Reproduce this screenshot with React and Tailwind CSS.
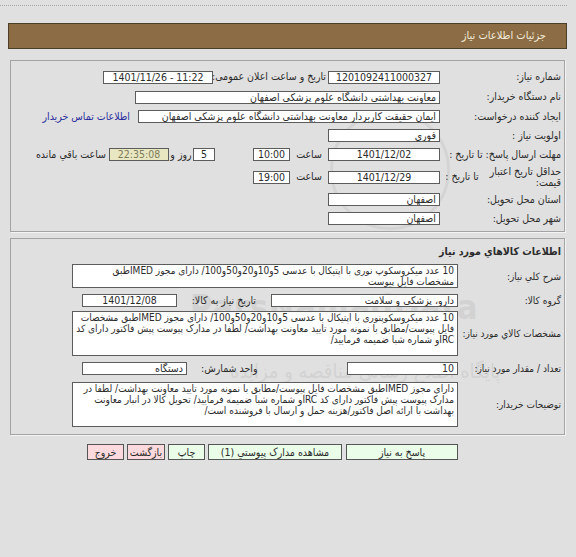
import React from 'react';

const Field = ({ w, children, align = 'right', ltr = false, className = '' }) => (
  <div
    dir={ltr ? 'ltr' : undefined}
    className={`h-[13px] bg-white border border-[#5c5c5c] leading-[11px] px-[3px] whitespace-nowrap overflow-hidden ${
      align === 'center' ? 'text-center' : 'text-right'
    } ${className}`}
    style={{ width: w }}
  >
    {children}
  </div>
);

const Row = ({ h, label, labelW, children }) => (
  <div className="flex items-center" style={{ height: h }}>
    <div className="shrink-0 text-right pr-[3px] whitespace-nowrap" style={{ width: labelW }}>
      {label}
    </div>
    {children}
  </div>
);

const Area = ({ h, children }) => (
  <div
    className="w-[386px] bg-white border border-[#5c5c5c] px-[3px] text-[10px] leading-[11px] text-right overflow-hidden"
    style={{ height: h }}
  >
    {children}
  </div>
);

const Label2 = ({ children }) => (
  <div className="w-[106px] shrink-0 text-right pr-[3px] whitespace-nowrap text-[10px]">{children}</div>
);

export default function App() {
  return (
    <div className="relative w-[576px] h-[557px] overflow-hidden bg-[#e0e0e0] text-[10.5px] text-[#2b2b2b] font-['DejaVu_Sans_Condensed','DejaVu_Sans',sans-serif]">
      {/* faint watermark */}
      <div className="absolute left-[190px] top-[282px] text-[34px] font-bold text-[#000] opacity-[0.06] tracking-wide pointer-events-none">
        ParsNamadData
      </div>
      <div className="absolute left-[330px] top-[110px] w-[120px] h-[120px] rounded-full border-[3px] border-[#000] opacity-[0.05] pointer-events-none" />
      <div dir="rtl" className="absolute left-[230px] top-[356px] text-[20px] text-[#000] opacity-[0.06] pointer-events-none">
        پایگاه اطلاع رسانی مناقصه و مزایده
      </div>

      <div className="pl-[8px] pt-[5px]">
        <div dir="rtl" className="w-[559px] relative">
          <div className="border-t border-dotted border-[#a8a8a8] -ml-[8px]" />

          {/* header */}
          <div className="mt-[17px] h-[26px] bg-[#8b6c44] border border-[#4d3e29] flex items-center pr-[20px] text-[#f3ecdc] text-[11px]">
            جزئیات اطلاعات نیاز
          </div>

          {/* box 1 */}
          <div className="mt-[11px] mx-[2px] border border-[#a3a3a3] pt-[6px] pb-[3px] shadow-[1px_1px_0_#f4f4f4]">
            <Row h={20} labelW={124} label="شماره نیاز:">
              <Field w={112} align="center">1201092411000327</Field>
              <div className="w-[115px] text-right pr-[2px] whitespace-nowrap">تاریخ و ساعت اعلان عمومی:</div>
              <Field w={110} align="center" ltr>1401/11/26 - 11:22</Field>
            </Row>
            <Row h={20} labelW={124} label="نام دستگاه خریدار:">
              <Field w={305}>معاونت بهداشتی دانشگاه علوم پزشکی اصفهان</Field>
            </Row>
            <Row h={19} labelW={124} label="ایجاد کننده درخواست:">
              <Field w={302}>ایمان حقیقت کاربردار معاونت بهداشتی دانشگاه علوم پزشکی اصفهان</Field>
              <a className="mr-[8px] text-[#2b2f9e] whitespace-nowrap">اطلاعات تماس خریدار</a>
            </Row>
            <Row h={19} labelW={124} label="اولویت نیاز :">
              <Field w={112}>فوری</Field>
            </Row>
            <Row h={19} labelW={124} label="مهلت ارسال پاسخ: تا تاریخ :">
              <Field w={112} align="center">1401/12/02</Field>
              <div className="w-[38px] text-center">ساعت</div>
              <Field w={37} align="center">10:00</Field>
              <div className="w-[38px]" />
              <Field w={22} align="center">5</Field>
              <div className="w-[24px] text-center whitespace-nowrap">روز و</div>
              <Field w={60} align="center" className="!bg-[#e9e7c2] text-[#7d7c5a]">22:35:08</Field>
              <div className="mr-[3px] whitespace-nowrap">ساعت باقي مانده</div>
            </Row>
            <div className="flex items-center h-[26px]">
              <div className="w-[124px] shrink-0 flex items-center">
                <div className="w-[80px] text-right pr-[3px] leading-[11px]">حداقل تاریخ اعتبار قیمت:</div>
                <div className="flex-1 text-center whitespace-nowrap">تا تاریخ :</div>
              </div>
              <Field w={112} align="center">1401/12/29</Field>
              <div className="w-[38px] text-center">ساعت</div>
              <Field w={37} align="center">19:00</Field>
            </div>
            <Row h={19} labelW={124} label="استان محل تحویل:">
              <Field w={112}>اصفهان</Field>
            </Row>
            <Row h={19} labelW={124} label="شهر محل تحویل:">
              <Field w={112}>اصفهان</Field>
            </Row>
          </div>

          {/* box 2 */}
          <div className="mt-[6px] mx-[2px] border border-[#a3a3a3] pt-[4px] pb-[7px] shadow-[1px_1px_0_#f4f4f4]">
            <div className="h-[18px] flex items-center pr-[3px] font-bold">اطلاعات کالاهاي مورد نیاز</div>
            <div className="flex items-center mt-[3px]">
              <Label2>شرح کلي نیاز:</Label2>
              <Area h={24}>
                10 عدد میکروسکوپ نوری با اپتیکال با عدسی 5و10و20و50و100/ دارای مجوز IMEDطبق مشخصات فایل پیوست
              </Area>
            </div>
            <div className="flex items-center h-[13px] mt-[6px]">
              <Label2>گروه کالا:</Label2>
              <Field w={187}>دارو، پزشکی و سلامت</Field>
              <div className="w-[94px] text-right pr-[15px] whitespace-nowrap">تاریخ نیاز به کالا:</div>
              <Field w={95} align="center">1401/12/08</Field>
            </div>
            <div className="flex items-center mt-[4px]">
              <Label2>مشخصات کالاي مورد نیاز:</Label2>
              <Area h={45}>
                10 عدد میکروسکوپنوری با اپتیکال با عدسی 5و10و20و50و100/ دارای مجوز IMEDطبق مشخصات فایل پیوست/مطابق با نمونه مورد تایید معاونت بهداشت/ لطفا در مدارک پیوست پیش فاکتور دارای کد  IRCو شماره شبا ضمیمه فرمایید/
              </Area>
            </div>
            <div className="flex items-center h-[13px] mt-[6px]">
              <Label2>تعداد / مقدار مورد نیاز:</Label2>
              <Field w={111}>10</Field>
              <div className="w-[160px] text-left pl-[14px] whitespace-nowrap">واحد شمارش:</div>
              <Field w={105}>دستگاه</Field>
            </div>
            <div className="flex items-center mt-[7px]">
              <Label2>توضیحات خریدار:</Label2>
              <Area h={45}>
                {' '}دارای مجوز IMEDطبق مشخصات فایل پیوست/مطابق با نمونه مورد تایید معاونت بهداشت/ لطفا در مدارک پیوست پیش فاکتور دارای کد  IRCو شماره شبا ضمیمه فرمایید/ تحویل کالا در انبار معاونت بهداشت با ارائه اصل فاکتور/هزینه حمل و ارسال با فروشنده است/
              </Area>
            </div>
          </div>

          {/* buttons */}
          <div className="mt-[9px] flex pr-[109px]">
            <div className="w-[112px] h-[16px] bg-[#e9fde9] border border-[#555] text-center leading-[14px]">پاسخ به نیاز</div>
            <div className="w-[134px] h-[16px] mr-[4px] bg-[#e9fde9] border border-[#555] text-center leading-[14px]">مشاهده مدارک پیوستي (1)</div>
            <div className="w-[37px] h-[16px] mr-[3px] bg-[#e9fde9] border border-[#555] text-center leading-[14px]">چاپ</div>
            <div className="w-[38px] h-[16px] mr-[3px] bg-[#fbd9dc] border border-[#555] text-center leading-[14px] whitespace-nowrap">بازگشت</div>
            <div className="w-[37px] h-[16px] mr-[3px] bg-[#fbd9dc] border border-[#555] text-center leading-[14px]">خروج</div>
          </div>
        </div>
      </div>
    </div>
  );
}
